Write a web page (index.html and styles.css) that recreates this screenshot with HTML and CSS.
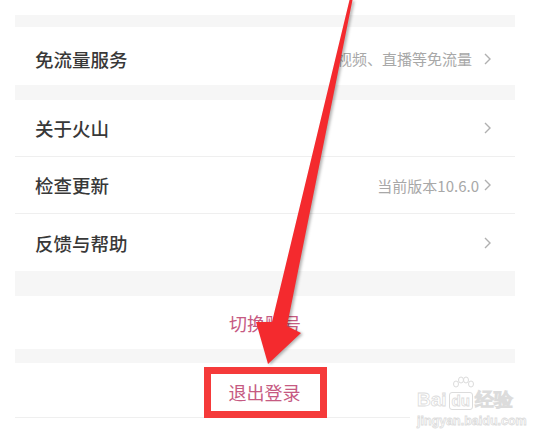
FILE: index.html
```html
<!DOCTYPE html>
<html>
	<head>
		<meta http-equiv="Content-Type" content="text/html; charset=utf-8">
		<title>设置</title>
		<link rel="stylesheet" href="styles.css">
	</head>
	<body>
		<div class="panel">
			<div class="cut_row"></div>
			<div class="band band_a"></div>

			<div class="item item_first">
				<span class="label">免流量服务</span>
				<span class="value value_far">视频、直播等免流量</span>
				<svg class="chevron" width="7" height="12" viewBox="0 0 7 12"><path d="M1 1 L6 6 L1 11" /></svg>
			</div>

			<div class="band band_b"></div>

			<div class="item line">
				<span class="label">关于火山</span>
				<svg class="chevron" width="7" height="12" viewBox="0 0 7 12"><path d="M1 1 L6 6 L1 11" /></svg>
			</div>
			<div class="item line">
				<span class="label">检查更新</span>
				<span class="value">当前版本10.6.0</span>
				<svg class="chevron" width="7" height="12" viewBox="0 0 7 12"><path d="M1 1 L6 6 L1 11" /></svg>
			</div>
			<div class="item">
				<span class="label">反馈与帮助</span>
				<svg class="chevron" width="7" height="12" viewBox="0 0 7 12"><path d="M1 1 L6 6 L1 11" /></svg>
			</div>

			<div class="band band_c"></div>

			<div class="action action_switch">
				<span class="action_text">切换账号</span>
			</div>

			<div class="band band_d"></div>

			<div class="action action_logout">
				<span class="action_text marked">退出登录</span>
			</div>
		</div>

		<!--baidu jingyan watermark-->
		<div class="watermark">
			<div class="wm_logo">
				<span>Bai</span>
				<span class="wm_du">
					<svg class="wm_paw" width="24" height="16" viewBox="0 0 24 16">
						<ellipse cx="5" cy="8" rx="2.5" ry="3" />
						<ellipse cx="10" cy="4" rx="2.5" ry="3" />
						<ellipse cx="15" cy="4" rx="2.5" ry="3" />
						<ellipse cx="20" cy="8" rx="2.5" ry="3" />
					</svg>
					du
				</span>
				<span>经验</span>
			</div>
			<div class="wm_url">jingyan.baidu.com</div>
		</div>

		<!--annotation arrow-->
		<svg class="arrow" width="544" height="439" viewBox="0 0 544 439">
			<polygon points="349.5,0 352.5,0 287,326 301,333 268,364 256,322 272,322" />
		</svg>
	</body>
</html>
```

FILE: styles.css
```css
*{
	margin:0;
	padding:0;
}

body{
	background:#fff;
	font-family:"Noto Sans CJK SC", "Noto Sans", sans-serif;
	width:544px;
	height:439px;
	overflow:hidden;
	position:relative;
}

.panel{
	margin-left:15px;
	width:500px;
}

.cut_row{
	height:15px;
}

.band{
	background:#f6f6f6;
}

.band_a{ height:12px; }
.band_b{ height:15px; }
.band_c{ height:25px; }
.band_d{ height:14px; }

.item{
	display:flex;
	align-items:center;
	height:57px;
	padding:0 24px 0 20px;
	box-sizing:border-box;
}

.item_first{
	height:58px;
	padding-top:5px;
}

.line{
	border-bottom:1px solid #efefef;
}

.label{
	font-size:18.5px;
	font-weight:500;
	color:#383838;
	flex:1;
}

.value{
	font-size:15px;
	color:#a8a8a8;
	margin-right:5px;
}

.value_far{
	margin-right:12px;
}

.chevron{
	fill:none;
	stroke:#b0b0b0;
	stroke-width:1.4;
}

.action{
	display:flex;
	justify-content:center;
}

.action_switch{
	height:53px;
	align-items:center;
}

.action_logout{
	height:55px;
	align-items:flex-end;
	border-bottom:1px solid #efefef;
	box-sizing:border-box;
}

.action_text{
	font-size:18px;
	color:#c65a82;
}

.marked{
	display:inline-block;
	border:7px solid #f53a3a;
	padding:0 19px 0 18px;
	height:37px;
	line-height:37px;
	margin-bottom:-1px;
}

.watermark{
	position:absolute;
	left:410px;
	top:378px;
	width:134px;
	height:61px;
	background:#fff;
	padding-left:7px;
	box-sizing:border-box;
	color:#fff;
	-webkit-text-stroke:0.8px #dcdcdc;
	font-family:"Liberation Sans", sans-serif;
}

.wm_logo{
	display:flex;
	align-items:flex-end;
	font-size:19px;
	font-weight:bold;
	line-height:20px;
	padding-top:12px;
}

.wm_du{
	position:relative;
	border:1px solid #dcdcdc;
	border-radius:3px;
	font-size:15px;
	line-height:16px;
	padding:0 2px;
	margin:0 2px;
}

.wm_paw{
	position:absolute;
	left:1px;
	top:-17px;
	fill:#fff;
	stroke:#dcdcdc;
	stroke-width:1;
}

.wm_url{
	font-size:12.5px;
	font-weight:bold;
	margin-top:4px;
}

.arrow{
	position:absolute;
	left:0;
	top:0;
	pointer-events:none;
	fill:#f42a2e;
	filter:drop-shadow(2px 1px 1.5px rgba(0,0,0,0.3));
}
```
